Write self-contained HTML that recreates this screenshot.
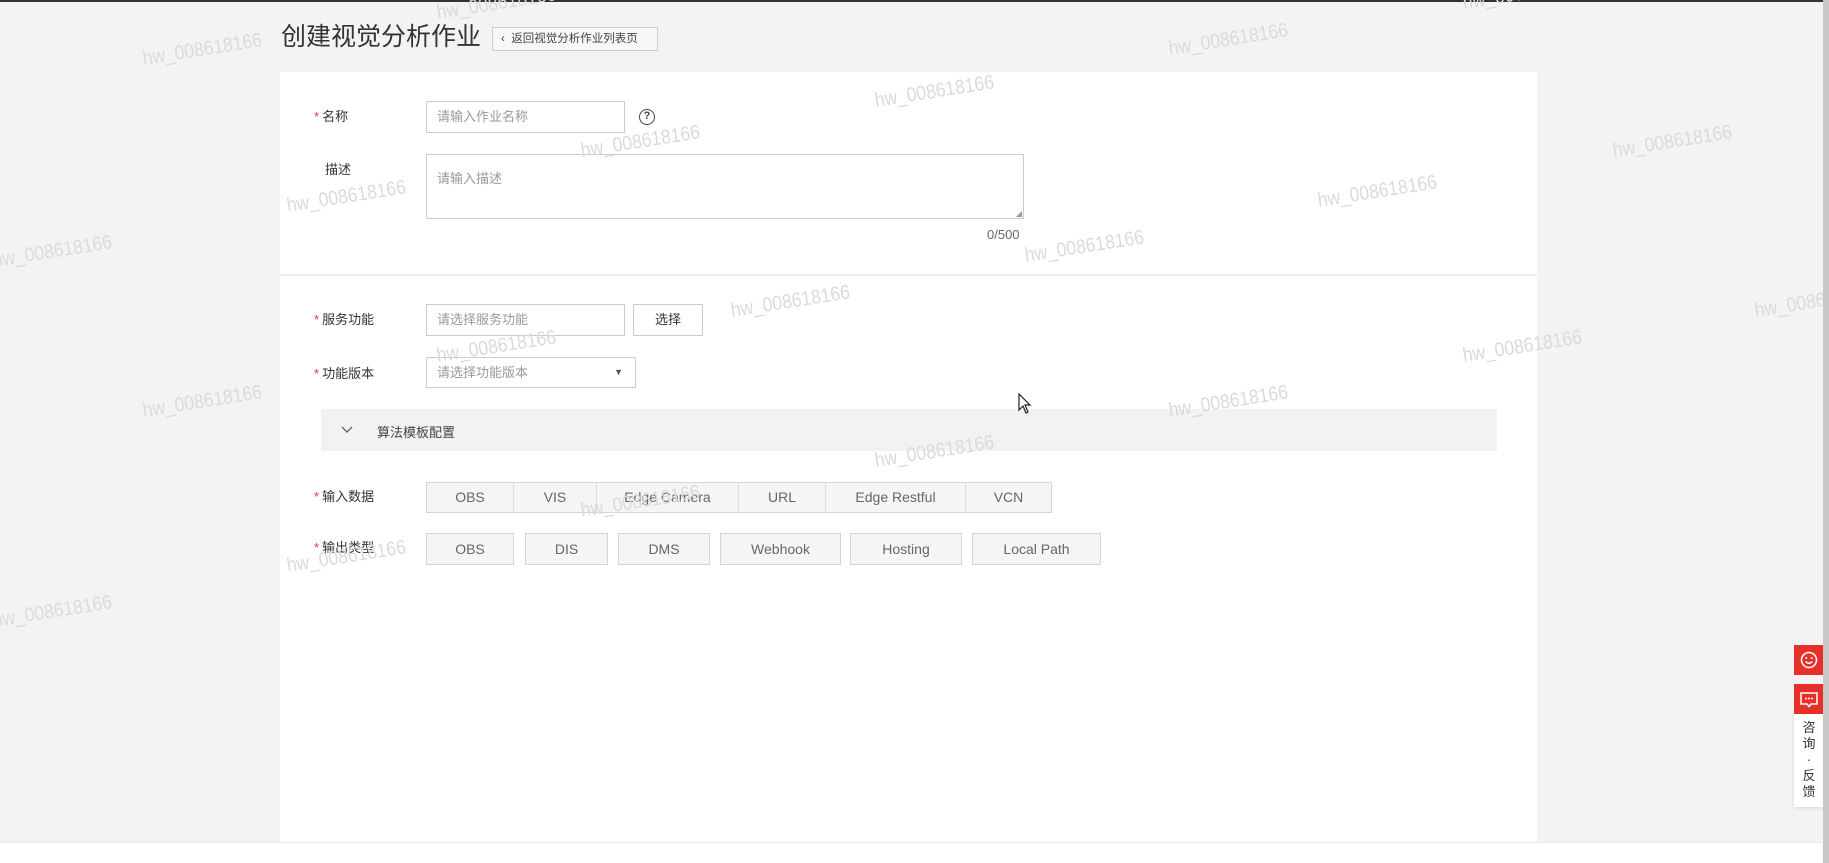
<!DOCTYPE html>
<html><head><meta charset="utf-8"><style>
*{box-sizing:border-box;margin:0;padding:0}
body{width:1829px;height:863px;overflow:hidden;background:#f3f3f3;font-family:"Liberation Sans","Noto Sans CJK SC",sans-serif;color:#333;position:relative;font-size:13px}
.abs{position:absolute}
.top{left:0;top:0;width:1829px;height:2px;background:#333}
.scroll{right:0;top:0;width:6px;height:863px;background:#c8c8c8}
.bottom{left:0;top:842px;width:1822px;height:21px;background:#fff;border-top:1px solid #e8e8e8}
.title{left:281px;top:22px;font-size:25px;color:#333;line-height:30px}
.back{left:492px;top:27px;width:166px;height:24px;border:1px solid #ccc;background:#f7f7f7;font-size:11.5px;line-height:22px;padding-left:8px;color:#444}
.card{left:280px;top:72px;width:1257px;height:770px;background:#fff}
.div{left:280px;top:274px;width:1257px;height:2px;background:#eee}
.lab{font-size:13px;color:#333;line-height:16px}
.lab b{color:#e53935;font-weight:normal;margin-right:3px}
.inp{border:1px solid #ccc;background:#fff;font-size:13px;color:#999;padding-left:10px}
.btn{border:1px solid #ccc;background:#fff;text-align:center;font-size:13px;color:#333}
.seg{left:426px;top:482px;width:626px;height:31px;border:1px solid #d5d5d5;background:#f5f5f5;display:flex}
.seg div{border-right:1px solid #ddd;text-align:center;line-height:29px;font-size:14px;color:#666}
.ob{top:533px;height:32px;border:1px solid #d5d5d5;background:#f5f5f5;text-align:center;line-height:30px;font-size:14px;color:#666}
.wm{font-size:20px;color:#dadada;transform:rotate(-9deg) scaleX(0.88);transform-origin:left center;white-space:nowrap}
.red{left:1794px;width:30px;height:30px;background:#e8302a}
</style></head><body>
<div class="abs top"></div>
<div class="abs title">创建视觉分析作业</div>
<div class="abs back">&#8249;&nbsp; 返回视觉分析作业列表页</div>
<div class="abs card"></div>
<div class="abs div"></div>

<div class="abs lab" style="left:314px;top:109px"><b>*</b>名称</div>
<div class="abs inp" style="left:426px;top:101px;width:199px;height:32px;line-height:30px">请输入作业名称</div>
<div class="abs" style="left:639px;top:109px;width:16px;height:16px;border:1.5px solid #444;border-radius:50%;font-size:11px;font-weight:bold;text-align:center;line-height:13px;color:#444">?</div>
<div class="abs lab" style="left:325px;top:162px">描述</div>
<div class="abs inp" style="left:426px;top:154px;width:598px;height:65px;padding-top:13px">请输入描述</div>
<svg class="abs" style="left:1016px;top:211px" width="6" height="6"><path d="M6 0 L6 6 L0 6 Z" fill="#999"/></svg>
<div class="abs" style="left:987px;top:227px;font-size:13px;color:#666">0/500</div>

<div class="abs lab" style="left:314px;top:312px"><b>*</b>服务功能</div>
<div class="abs inp" style="left:426px;top:304px;width:199px;height:32px;line-height:30px">请选择服务功能</div>
<div class="abs btn" style="left:633px;top:304px;width:70px;height:32px;line-height:30px">选择</div>
<div class="abs lab" style="left:314px;top:366px"><b>*</b>功能版本</div>
<div class="abs inp" style="left:426px;top:357px;width:210px;height:31px;line-height:29px">请选择功能版本<span style="position:absolute;right:12px;top:0;font-size:9px;color:#555">&#9660;</span></div>

<div class="abs" style="left:321px;top:409px;width:1176px;height:42px;background:#f2f2f2"></div>
<svg class="abs" style="left:341px;top:426px" width="12" height="8"><path d="M1 1 L6 6 L11 1" fill="none" stroke="#666" stroke-width="1.4"/></svg>
<div class="abs" style="left:377px;top:422px;font-size:13px;color:#444">算法模板配置</div>

<div class="abs lab" style="left:314px;top:489px"><b>*</b>输入数据</div>
<div class="abs seg"><div style="width:87px">OBS</div><div style="width:83px">VIS</div><div style="width:142px">Edge Camera</div><div style="width:87px">URL</div><div style="width:140px">Edge Restful</div><div style="width:85px;border:0">VCN</div></div>

<div class="abs lab" style="left:314px;top:540px"><b>*</b>输出类型</div>
<div class="abs ob" style="left:426px;width:88px">OBS</div>
<div class="abs ob" style="left:525px;width:83px">DIS</div>
<div class="abs ob" style="left:618px;width:92px">DMS</div>
<div class="abs ob" style="left:720px;width:121px">Webhook</div>
<div class="abs ob" style="left:850px;width:112px">Hosting</div>
<div class="abs ob" style="left:972px;width:129px">Local Path</div>

<div class="abs red" style="top:645px"><svg width="30" height="30"><circle cx="15" cy="15" r="7.5" fill="none" stroke="#fff" stroke-width="1.5"/><circle cx="12.3" cy="13" r="1" fill="#fff"/><circle cx="17.7" cy="13" r="1" fill="#fff"/><path d="M11.5 16.5 Q15 20 18.5 16.5" fill="none" stroke="#fff" stroke-width="1.3"/></svg></div>
<div class="abs red" style="top:684px"><svg width="30" height="30"><path d="M7 9 H23 V20 H17 L15 22.5 L13 20 H7 Z" fill="none" stroke="#fff" stroke-width="1.5"/><circle cx="12" cy="14.5" r="1" fill="#fff"/><circle cx="15" cy="14.5" r="1" fill="#fff"/><circle cx="18" cy="14.5" r="1" fill="#fff"/></svg></div>
<div class="abs" style="left:1794px;top:714px;width:30px;height:93px;background:#fff;box-shadow:0 1px 4px rgba(0,0,0,.12);font-size:13px;line-height:16px;text-align:center;padding-top:6px;color:#333">咨<br>询<br>·<br>反<br>馈</div>

<div class="abs wm" style="left:143px;top:48px">hw_008618166</div>
<div class="abs wm" style="left:437px;top:2px">hw_008618166</div>
<div class="abs wm" style="left:1463px;top:-8px">hw_008618166</div>
<div class="abs wm" style="left:1169px;top:38px">hw_008618166</div>
<div class="abs wm" style="left:875px;top:90px">hw_008618166</div>
<div class="abs wm" style="left:1613px;top:140px">hw_008618166</div>
<div class="abs wm" style="left:581px;top:140px">hw_008618166</div>
<div class="abs wm" style="left:1318px;top:190px">hw_008618166</div>
<div class="abs wm" style="left:287px;top:195px">hw_008618166</div>
<div class="abs wm" style="left:-7px;top:250px">hw_008618166</div>
<div class="abs wm" style="left:1025px;top:245px">hw_008618166</div>
<div class="abs wm" style="left:731px;top:300px">hw_008618166</div>
<div class="abs wm" style="left:1755px;top:300px">hw_008618166</div>
<div class="abs wm" style="left:1463px;top:345px">hw_008618166</div>
<div class="abs wm" style="left:437px;top:345px">hw_008618166</div>
<div class="abs wm" style="left:143px;top:400px">hw_008618166</div>
<div class="abs wm" style="left:1169px;top:400px">hw_008618166</div>
<div class="abs wm" style="left:875px;top:450px">hw_008618166</div>
<div class="abs wm" style="left:581px;top:500px">hw_008618166</div>
<div class="abs wm" style="left:287px;top:555px">hw_008618166</div>
<div class="abs wm" style="left:-7px;top:610px">hw_008618166</div>

<svg class="abs" style="left:1018px;top:393px" width="14" height="22" viewBox="0 0 14 22"><path d="M1 1 L1 17 L5 13 L8 20 L10 19 L7 12 L12 12 Z" fill="#fff" stroke="#222" stroke-width="1.2"/></svg>

<div class="abs bottom"></div>
<div class="abs scroll"></div>
</body></html>
